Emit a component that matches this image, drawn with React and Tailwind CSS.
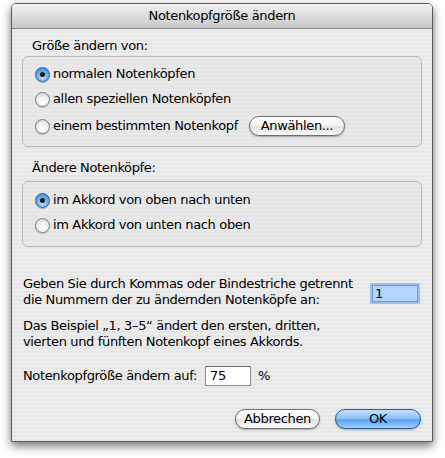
import React from "react";

const stripes =
  "bg-[repeating-linear-gradient(180deg,#ededed_0px,#ededed_2px,#e6e6e6_2px,#e6e6e6_4px)]";

function Radio({ checked, label }) {
  return (
    <div className="flex items-center h-[16px]">
      {checked ? (
        <span className="w-[15px] h-[15px] rounded-full border border-[#3b5f8f] bg-[radial-gradient(circle_at_50%_70%,#bfe3ff_0%,#6fb0f0_45%,#2f7fd6_100%)] flex items-center justify-center shadow-[0_1px_1px_rgba(0,0,0,0.25)]">
          <span className="w-[5px] h-[5px] rounded-full bg-[#1a1a1a]" />
        </span>
      ) : (
        <span className="w-[15px] h-[15px] rounded-full border border-[#7a7a7a] bg-[radial-gradient(circle_at_50%_75%,#ffffff_0%,#f2f2f2_45%,#cfcfcf_100%)] shadow-[0_1px_1px_rgba(0,0,0,0.2)]" />
      )}
      <span className="ml-[3px]">{label}</span>
    </div>
  );
}

function PushButton({ children, className = "", primary }) {
  return (
    <div
      className={`h-[20px] rounded-full flex items-center justify-center border shadow-[0_1px_2px_rgba(0,0,0,0.3)] ${
        primary
          ? "border-[#2d5a9a] bg-[linear-gradient(180deg,#c6e2ff_0%,#8fc2f6_45%,#5ea3ef_55%,#9ad0ff_100%)]"
          : "border-[#6f6f6f] bg-[linear-gradient(180deg,#ffffff_0%,#f4f4f4_45%,#e2e2e2_55%,#fafafa_100%)]"
      } ${className}`}
    >
      {children}
    </div>
  );
}

export default function App() {
  return (
    <div
      className="w-[445px] h-[458px] bg-white text-[13px] leading-[16px] tracking-[-0.35px] text-black overflow-hidden"
      style={{ fontFamily: '"Lucida Grande", "DejaVu Sans", sans-serif' }}
    >
      <div className="ml-[11px] mt-[3px] w-[422px] h-[439px] flex flex-col border border-[#5a5a5a] rounded-t-[5px] shadow-[0_4px_10px_rgba(0,0,0,0.55)] overflow-hidden">
        {/* title bar */}
        <div className="h-[25px] shrink-0 flex items-center justify-center border-b border-[#8a8a8a] bg-[linear-gradient(180deg,#f2f2f2_0%,#dcdcdc_50%,#c9c9c9_100%)]">
          <span className="text-[13px]">Notenkopfgröße ändern</span>
        </div>

        {/* body */}
        <div className={`flex-1 ${stripes} px-[10px] flex flex-col`}>
          <div className="mt-[9px] ml-[10px]">Größe ändern von:</div>

          <div className="mt-[2px] h-[91px] rounded-[6px] border border-[#b8b8b8] bg-[#e4e4e4]/40 pl-[12px] pt-[9px] flex flex-col gap-[9px]">
            <Radio checked label="normalen Notenköpfen" />
            <Radio label="allen speziellen Notenköpfen" />
            <div className="flex items-center">
              <Radio label="einem bestimmten Notenkopf" />
              <PushButton className="ml-[11px] w-[96px]">Anwählen...</PushButton>
            </div>
          </div>

          <div className="mt-[13px] ml-[10px]">Ändere Notenköpfe:</div>

          <div className="mt-[5px] h-[66px] rounded-[6px] border border-[#b8b8b8] bg-[#e4e4e4]/40 pl-[12px] pt-[10px] flex flex-col gap-[9px]">
            <Radio checked label="im Akkord von oben nach unten" />
            <Radio label="im Akkord von unten nach oben" />
          </div>

          <div className="mt-[29px] flex items-center">
            <div className="ml-[1px] w-[340px]">
              Geben Sie durch Kommas oder Bindestriche getrennt
              <br />
              die Nummern der zu ändernden Notenköpfe an:
            </div>
            <div className="ml-[9px] mt-[3px] w-[46px] h-[17px] border border-[#6a9ad8] bg-[#b5d5ff] shadow-[0_0_0_2px_#9dbfe8] flex items-center pl-[2px]">
              1
            </div>
          </div>

          <div className="mt-[10px] ml-[1px]">
            Das Beispiel „1, 3–5“ ändert den ersten, dritten,
            <br />
            vierten und fünften Notenkopf eines Akkords.
          </div>

          <div className="mt-[16px] ml-[1px] flex items-center">
            <span>Notenkopfgröße ändern auf:</span>
            <div className="ml-[8px] w-[46px] h-[20px] border border-[#8c8c8c] border-t-[#6e6e6e] bg-white flex items-center pl-[4px]">
              75
            </div>
            <span className="ml-[7px]">%</span>
          </div>

          <div className="mt-[23px] flex justify-end pr-[1px]">
            <PushButton className="w-[85px]">Abbrechen</PushButton>
            <PushButton primary className="ml-[15px] w-[86px]">
              OK
            </PushButton>
          </div>
        </div>
      </div>
    </div>
  );
}
